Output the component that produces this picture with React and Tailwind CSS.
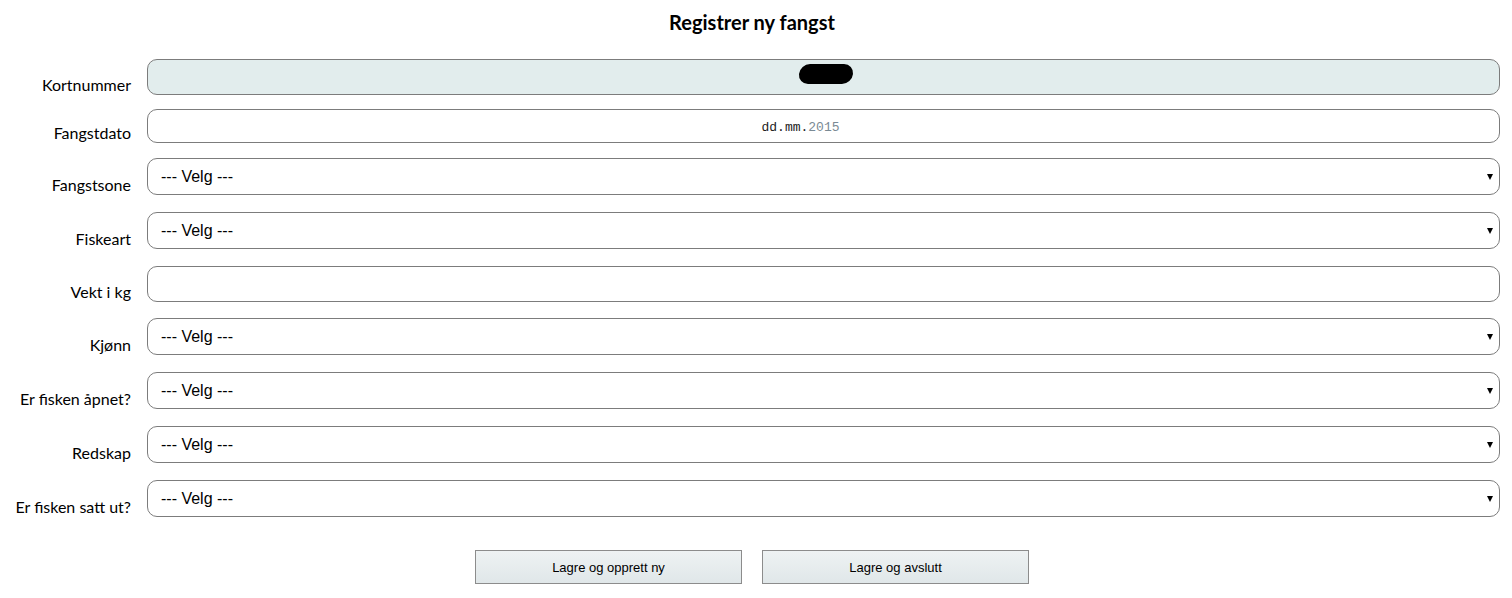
const rows = [
  { label: 'Kortnummer', kind: 'card', h: 'h-[36px]', mb: 'mb-[14px]' },
  { label: 'Fangstdato', kind: 'date', h: 'h-[34px]', mb: 'mb-[15px]' },
  { label: 'Fangstsone', kind: 'select', h: 'h-[37px]', mb: 'mb-[17px]' },
  { label: 'Fiskeart', kind: 'select', h: 'h-[37px]', mb: 'mb-[17px]' },
  { label: 'Vekt i kg', kind: 'text', h: 'h-[36px]', mb: 'mb-[16px]' },
  { label: 'Kjønn', kind: 'select', h: 'h-[37px]', mb: 'mb-[17px]' },
  { label: 'Er fisken åpnet?', kind: 'select', h: 'h-[37px]', mb: 'mb-[17px]' },
  { label: 'Redskap', kind: 'select', h: 'h-[37px]', mb: 'mb-[17px]' },
  { label: 'Er fisken satt ut?', kind: 'select', h: 'h-[37px]', mb: 'mb-0' },
];

function Field({ kind, h }) {
  const base = `${h} w-full rounded-[10px] border border-[#7c7c7c] flex items-center`;
  if (kind === 'card') {
    return (
      <div className={`${base} bg-[#e2eded] justify-center`}>
        {/* masked card number */}
        <div className="w-[54px] h-[20px] bg-black rounded-[10px] -skew-x-6 ml-[4px] mt-[-6px]" />
      </div>
    );
  }
  if (kind === 'date') {
    return (
      <div className={`${base} bg-white justify-center pr-[46px] pt-[3px] font-['Liberation_Mono',monospace] text-[13px]`}>
        <span className="text-[#222]">dd.mm.</span>
        <span className="text-[#7a8a94]">2015</span>
      </div>
    );
  }
  if (kind === 'select') {
    return (
      <div className={`${base} bg-white justify-between pl-[13px] pr-[6px] font-['Liberation_Sans',Arial,sans-serif] text-[16px] text-black`}>
        <span>--- Velg ---</span>
        <span className="w-0 h-0 border-l-[3px] border-r-[3px] border-t-[6px] border-l-transparent border-r-transparent border-t-black" />
      </div>
    );
  }
  return <div className={`${base} bg-white`} />;
}

export default function App() {
  return (
    <div className="w-[1504px] bg-white pt-[10px] font-['Lato','DejaVu_Sans',sans-serif] text-black">
      <h1 className="text-center text-[20px] font-bold leading-[24px] mb-[25px]">Registrer ny fangst</h1>

      <form className="flex flex-col pr-[4px]">
        {rows.map((r) => (
          <div key={r.label} className={`flex items-end gap-4 ${r.mb}`}>
            <label className="w-[131px] shrink-0 text-right text-[16px] leading-[20px] whitespace-nowrap">
              {r.label}
            </label>
            <Field kind={r.kind} h={r.h} />
          </div>
        ))}
      </form>

      <div className="flex justify-center gap-5 mt-[33px] font-['Liberation_Sans',Arial,sans-serif] text-[13px]">
        <button className="w-[267px] h-[34px] pt-[1px] border border-[#8c8c8c] bg-gradient-to-b from-[#eef2f3] to-[#e0e7e9] text-black">
          Lagre og opprett ny
        </button>
        <button className="w-[267px] h-[34px] pt-[1px] border border-[#8c8c8c] bg-gradient-to-b from-[#eef2f3] to-[#e0e7e9] text-black">
          Lagre og avslutt
        </button>
      </div>
    </div>
  );
}
